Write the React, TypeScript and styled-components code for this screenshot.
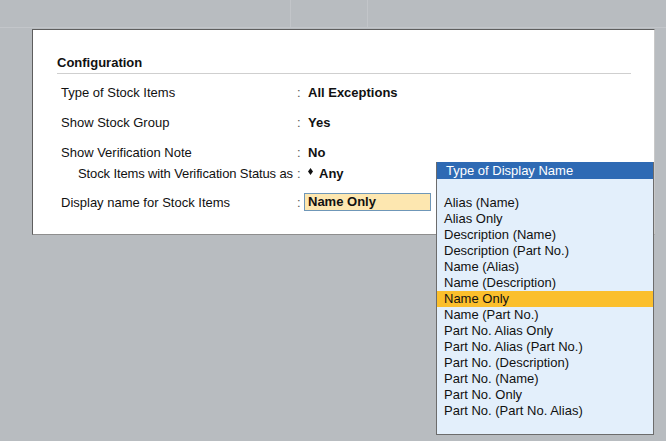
import React from "react";
import styled, { createGlobalStyle } from "styled-components";

const GlobalStyle = createGlobalStyle`
    html, body {
        margin: 0;
        padding: 0;
        background: #b8bcc0;
    }
    body {
        font-family: "Liberation Sans", Arial, sans-serif;
        font-size: 13px;
        color: #111;
    }
`;

const Page = styled.div`
    position: relative;
    width: 666px;
    height: 441px;
    overflow: hidden;
`;

const TopStrip = styled.div`
    display: flex;
    height: 28px;
    border-bottom: 1px solid #c3c6ca;
    box-sizing: border-box;
    margin-bottom: 1px;
`;

const StripCell = styled.div<{ $w: number }>`
    width: ${(p) => p.$w}px;
    flex: none;
    border-right: 1px solid #c2c5c9;
`;

const Panel = styled.div`
    margin-left: 32px;
    width: 623px;
    height: 206px;
    box-sizing: border-box;
    background: #fff;
    border-top: 1px solid #5e5e5e;
    border-left: 1px solid #5e5e5e;
    border-right: 1px solid #c8c8c8;
    border-bottom: 1px solid #8e8e8e;
    padding: 25px 23px 0 24px;
`;

const Heading = styled.div`
    font-weight: bold;
    line-height: 15px;
    padding-bottom: 3px;
    border-bottom: 1px solid #cfcfcf;
`;

const Rows = styled.div`
    padding-left: 4px;
`;

const Row = styled.div<{ $mt: number; $h?: number }>`
    display: flex;
    align-items: center;
    margin-top: ${(p) => p.$mt}px;
    height: ${(p) => p.$h ?? 15}px;
    line-height: 15px;
`;

const Label = styled.div<{ $indent?: boolean }>`
    width: 236px;
    flex: none;
    box-sizing: border-box;
    padding-left: ${(p) => (p.$indent ? 17 : 0)}px;
    white-space: nowrap;
    letter-spacing: ${(p) => (p.$indent ? "-0.12px" : "0")};
`;

const Colon = styled.div`
    width: 7px;
    flex: none;
    box-sizing: border-box;
    color: #555;
`;

const Value = styled.div`
    font-weight: bold;
    padding-left: 4px;
    display: flex;
    align-items: center;
`;

const Diamond = styled.svg`
    margin-right: 6px;
    margin-top: -5px;
`;

const Field = styled.div`
    width: 127px;
    height: 18px;
    box-sizing: border-box;
    border: 1px solid #6f97b8;
    background: #fde7b0;
    font-weight: bold;
    line-height: 16px;
    padding-left: 3px;
`;

const Popup = styled.div`
    position: absolute;
    left: 436px;
    top: 162px;
    width: 218px;
    height: 273px;
    box-sizing: border-box;
    border: 1px solid #6c6c6c;
    border-top: none;
    background: #e3effb;
`;

const PopupTitle = styled.div`
    background: #2e6ab4;
    color: #fff;
    height: 17px;
    line-height: 17px;
    padding-left: 9px;
`;

const OptionList = styled.div`
    padding-top: 16px;
`;

const Option = styled.div<{ $active?: boolean }>`
    height: 16px;
    line-height: 16px;
    padding-left: 7px;
    background: ${(p) => (p.$active ? "#fbbf2c" : "transparent")};
`;

const options = [
    "Alias (Name)",
    "Alias Only",
    "Description (Name)",
    "Description (Part No.)",
    "Name (Alias)",
    "Name (Description)",
    "Name Only",
    "Name (Part No.)",
    "Part No. Alias Only",
    "Part No. Alias (Part No.)",
    "Part No. (Description)",
    "Part No. (Name)",
    "Part No. Only",
    "Part No. (Part No. Alias)",
];

function App() {
    const selected = "Name Only";
    return (
        <Page>
            <GlobalStyle />
            <TopStrip>
                <StripCell $w={290} />
                <StripCell $w={76} />
            </TopStrip>
            <Panel>
                <Heading>Configuration</Heading>
                <Rows>
                    <Row $mt={11}>
                        <Label>Type of Stock Items</Label>
                        <Colon>:</Colon>
                        <Value>All Exceptions</Value>
                    </Row>
                    <Row $mt={15}>
                        <Label>Show Stock Group</Label>
                        <Colon>:</Colon>
                        <Value>Yes</Value>
                    </Row>
                    <Row $mt={15}>
                        <Label>Show Verification Note</Label>
                        <Colon>:</Colon>
                        <Value>No</Value>
                    </Row>
                    <Row $mt={6}>
                        <Label $indent>Stock Items with Verification Status as</Label>
                        <Colon>:</Colon>
                        <Value>
                            <Diamond width="5" height="7" viewBox="0 0 5 7">
                                <path d="M2.5 0 L5 3.5 L2.5 7 L0 3.5 Z" fill="#111" />
                            </Diamond>
                            Any
                        </Value>
                    </Row>
                    <Row $mt={12} $h={18}>
                        <Label>Display name for Stock Items</Label>
                        <Colon>:</Colon>
                        <Field>{selected}</Field>
                    </Row>
                </Rows>
            </Panel>
            <Popup>
                <PopupTitle>Type of Display Name</PopupTitle>
                <OptionList>
                    {options.map((o) => (
                        <Option key={o} $active={o === selected}>
                            {o}
                        </Option>
                    ))}
                </OptionList>
            </Popup>
        </Page>
    );
}

export default App;
